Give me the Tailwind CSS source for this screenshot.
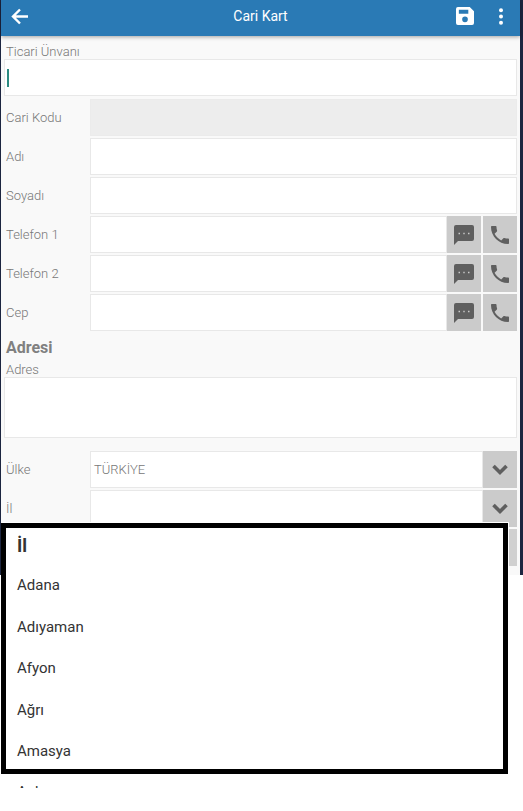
<!DOCTYPE html>
<html><head><meta charset="utf-8">
<script src="https://cdn.jsdelivr.net/npm/@tailwindcss/browser@4"></script>
</head>
<body class="bg-white font-['Roboto',sans-serif]">
<div class="relative w-[523px] h-[811px] overflow-hidden bg-white">
  <div class="h-[575px] w-[523px] bg-[#1c2540] pl-px pr-[3px] overflow-hidden">
    <div class="h-full bg-[#f9f9f9] text-[13px] text-[#777777] font-light">
      <header class="relative h-[36px] pb-[3px] bg-[#2a7ab5] flex items-center justify-center shadow-[0_1px_4px_rgba(0,0,0,0.35)] text-white">
        <svg class="absolute left-[9px] top-[7px] w-[20px] h-[20px]" viewBox="0 0 20 20" fill="none" stroke="white" stroke-width="2.4"><path d="M18 9.5H3M10 2.500L3 9.500L10 16.500"/></svg>
        <span class="text-[14px] font-normal">Cari Kart</span>
        <svg class="absolute left-[455px] top-[7px] w-[18px] h-[18px]" viewBox="0 0 19 19" fill="white"><path fill-rule="evenodd" d="M2 0H14.500L19 4.500V17A2 2 0 0 1 17 19H2A2 2 0 0 1 0 17V2A2 2 0 0 1 2 0ZM3 3V7H13V3ZM9.500 10A3 3 0 1 0 9.500 16A3 3 0 1 0 9.500 10Z"/></svg>
        <svg class="absolute left-[497px] top-[8px] w-[6px] h-[17px]" viewBox="0 0 6 17" fill="white"><circle cx="3" cy="2.200" r="2"/><circle cx="3" cy="8.500" r="2"/><circle cx="3" cy="14.800" r="2"/></svg>
      </header>
      <div class="pl-[2px] pr-[2px]">
        <div class="pl-[3px] h-[23px] pt-[8px] leading-[16px]">Ticari Ünvanı</div>
        <div class="h-[37px] ml-[1px] w-[513px] bg-white border border-[#e8e8e8] flex items-center pl-[2px]"><div class="w-[2px] h-[18px] bg-[#2b8a80]"></div></div>

        <div class="mt-[3px] flex flex-col gap-[2px]">
          <div class="flex items-center h-[37px]"><div class="w-[87px] pl-[3px]">Cari Kodu</div><div class="w-[427px] h-[37px] bg-[#ededed] border border-[#ebebeb]"></div></div>
          <div class="flex items-center h-[37px]"><div class="w-[87px] pl-[3px]">Adı</div><div class="w-[427px] h-[37px] bg-white border border-[#e8e8e8]"></div></div>
          <div class="flex items-center h-[37px]"><div class="w-[87px] pl-[3px]">Soyadı</div><div class="w-[427px] h-[37px] bg-white border border-[#e8e8e8]"></div></div>
          <div class="flex items-center h-[37px]"><div class="w-[87px] pl-[3px]">Telefon 1</div><div class="w-[357px] h-[37px] bg-white border border-[#e8e8e8]"></div>
            <div class="w-[34px] h-[37px] bg-[#cbcbcb] flex items-center justify-center"><svg class="w-[24px] h-[24px]" viewBox="0 0 24 24" fill="#5f5f5f"><path d="M22 4a2 2 0 0 0-2-2H4a2 2 0 0 0-2 2v18l4-4h14a2 2 0 0 0 2-2ZM8 11.200H6.500V9.800H8ZM12.700 11.200H11.300V9.800H12.700ZM17.500 11.200H16V9.800H17.500Z" fill-rule="evenodd"/></svg></div>
            <div class="ml-[2px] w-[34px] h-[37px] bg-[#cbcbcb] flex items-center justify-center"><svg class="w-[24px] h-[24px]" viewBox="0 0 24 24" fill="#5f5f5f"><path d="M6.600 10.800c1.400 2.800 3.800 5.100 6.600 6.600l2.200-2.200c.3-.3.700-.4 1-.2 1.100.4 2.300.6 3.600.6.600 0 1 .4 1 1V20c0 .6-.4 1-1 1C10.600 21 3 13.400 3 4c0-.6.400-1 1-1h3.500c.6 0 1 .4 1 1 0 1.300.2 2.500.6 3.600.1.300 0 .7-.2 1Z"/></svg></div>
          </div>
          <div class="flex items-center h-[37px]"><div class="w-[87px] pl-[3px]">Telefon 2</div><div class="w-[357px] h-[37px] bg-white border border-[#e8e8e8]"></div>
            <div class="w-[34px] h-[37px] bg-[#cbcbcb] flex items-center justify-center"><svg class="w-[24px] h-[24px]" viewBox="0 0 24 24" fill="#5f5f5f"><path d="M22 4a2 2 0 0 0-2-2H4a2 2 0 0 0-2 2v18l4-4h14a2 2 0 0 0 2-2ZM8 11.200H6.500V9.800H8ZM12.700 11.200H11.300V9.800H12.700ZM17.500 11.200H16V9.800H17.500Z" fill-rule="evenodd"/></svg></div>
            <div class="ml-[2px] w-[34px] h-[37px] bg-[#cbcbcb] flex items-center justify-center"><svg class="w-[24px] h-[24px]" viewBox="0 0 24 24" fill="#5f5f5f"><path d="M6.600 10.800c1.400 2.800 3.800 5.100 6.600 6.600l2.200-2.200c.3-.3.700-.4 1-.2 1.100.4 2.300.6 3.600.6.600 0 1 .4 1 1V20c0 .6-.4 1-1 1C10.600 21 3 13.400 3 4c0-.6.400-1 1-1h3.500c.6 0 1 .4 1 1 0 1.300.2 2.500.6 3.600.1.300 0 .7-.2 1Z"/></svg></div>
          </div>
          <div class="flex items-center h-[37px]"><div class="w-[87px] pl-[3px]">Cep</div><div class="w-[357px] h-[37px] bg-white border border-[#e8e8e8]"></div>
            <div class="w-[34px] h-[37px] bg-[#cbcbcb] flex items-center justify-center"><svg class="w-[24px] h-[24px]" viewBox="0 0 24 24" fill="#5f5f5f"><path d="M22 4a2 2 0 0 0-2-2H4a2 2 0 0 0-2 2v18l4-4h14a2 2 0 0 0 2-2ZM8 11.200H6.500V9.800H8ZM12.700 11.200H11.300V9.800H12.700ZM17.500 11.200H16V9.800H17.500Z" fill-rule="evenodd"/></svg></div>
            <div class="ml-[2px] w-[34px] h-[37px] bg-[#cbcbcb] flex items-center justify-center"><svg class="w-[24px] h-[24px]" viewBox="0 0 24 24" fill="#5f5f5f"><path d="M6.600 10.800c1.400 2.800 3.800 5.100 6.600 6.600l2.200-2.200c.3-.3.700-.4 1-.2 1.100.4 2.300.6 3.600.6.600 0 1 .4 1 1V20c0 .6-.4 1-1 1C10.600 21 3 13.400 3 4c0-.6.400-1 1-1h3.500c.6 0 1 .4 1 1 0 1.300.2 2.500.6 3.600.1.300 0 .7-.2 1Z"/></svg></div>
          </div>
        </div>
        <div class="pl-[3px] mt-[7px] text-[16px] leading-[20px] font-bold text-[#808080]">Adresi</div>
        <div class="pl-[3px] h-[17px] leading-[20px] mt-[2px]">Adres</div>
        <div class="h-[61px] ml-[1px] w-[513px] bg-white border border-[#e8e8e8]"></div>
        <div class="mt-[13px] flex flex-col gap-[2px]">
          <div class="flex items-center h-[37px]"><div class="w-[87px] pl-[3px]">Ülke</div><div class="w-[393px] h-[37px] bg-white border border-[#e8e8e8] pl-[3px] leading-[35px] text-[13px] font-light">TÜRKİYE</div>
            <div class="w-[34px] h-[37px] bg-[#cbcbcb] flex items-center justify-center"><svg class="w-[18px] h-[12px]" viewBox="0 0 18 12" fill="none" stroke="#5f5f5f" stroke-width="3.600"><path d="M2.500 2L9 8.500L15.500 2"/></svg></div></div>
          <div class="flex items-center h-[37px]"><div class="w-[87px] pl-[3px]">İl</div><div class="w-[393px] h-[37px] bg-white border border-[#e8e8e8]"></div>
            <div class="w-[34px] h-[37px] bg-[#cbcbcb] flex items-center justify-center"><svg class="w-[18px] h-[12px]" viewBox="0 0 18 12" fill="none" stroke="#5f5f5f" stroke-width="3.600"><path d="M2.500 2L9 8.500L15.500 2"/></svg></div></div>
          <div class="flex items-center h-[37px]"><div class="w-[480px]"></div><div class="w-[34px] h-[37px] bg-[#d0d0d0]"></div></div>
        </div>
      </div>
    </div>
  </div>
  <div class="absolute left-[1px] top-[523px] w-[507px] h-[251px] bg-white border-[5px] border-black text-[15px] text-[#333] pl-[11px] shadow-[1px_-1px_0_white]">
    <div class="h-[36px] text-[18px] font-bold leading-[35px]">İl</div>
    <div class="h-[41.5px] leading-[41.5px] mt-[1px]">Adana</div>
    <div class="h-[41.5px] leading-[41.5px]">Adıyaman</div>
    <div class="h-[41.5px] leading-[41.5px]">Afyon</div>
    <div class="h-[41.5px] leading-[41.5px]">Ağrı</div>
    <div class="h-[41.5px] leading-[41.5px]">Amasya</div>
  </div>
  <div class="absolute left-[17px] top-[785px] h-[3px] overflow-hidden text-[15px] leading-[14px] text-[#333]">Ankara</div>
</div>
</body></html>
